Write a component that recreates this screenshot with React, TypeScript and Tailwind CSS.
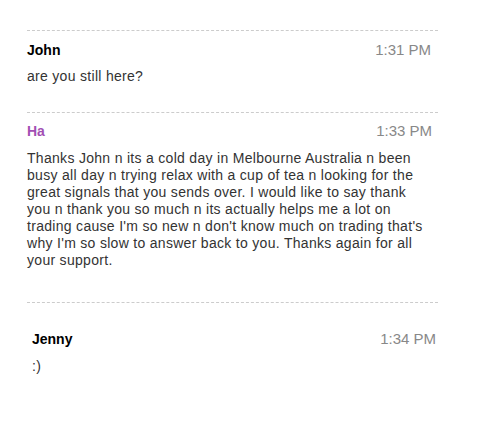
import React from "react";

type Message = {
  name: string;
  nameColor: string;
  time: string;
  lines: string[];
};

const messages: Message[] = [
  {
    name: "John",
    nameColor: "text-black",
    time: "1:31 PM",
    lines: ["are you still here?"],
  },
  {
    name: "Ha",
    nameColor: "text-[#a24fb3]",
    time: "1:33 PM",
    lines: [
      "Thanks John n its a cold day in Melbourne Australia n been",
      "busy all day n trying relax with a cup of tea n looking for the",
      "great signals that you sends over. I would like to say thank",
      "you n thank you so much n its actually helps me a lot on",
      "trading cause I'm so new n don't know much on trading that's",
      "why I'm so slow to answer back to you. Thanks again for all",
      "your support.",
    ],
  },
];

const MessageBody = ({ lines, className }: { lines: string[]; className: string }) => (
  <p className={`text-[14px] leading-[17px] text-[#333] tracking-[0.3px] whitespace-nowrap ${className}`}>
    {lines.map((line, i) => (
      <React.Fragment key={i}>
        {line}
        {i < lines.length - 1 && <br />}
      </React.Fragment>
    ))}
  </p>
);

export default function App() {
  return (
    <div className="min-h-[430px] w-[481px] bg-white pt-[30px] font-['Liberation_Sans',Arial,sans-serif]">
      <div className="ml-[27px] w-[411px]">
        {/* John */}
        <div className="border-t border-dashed border-[#cccccc] pt-[10px] pr-[7px] pb-[27px]">
          <div className="flex items-baseline justify-between">
            <span className={`text-[14px] leading-[17px] font-bold ${messages[0].nameColor}`}>{messages[0].name}</span>
            <span className="text-[15px] leading-[17px] text-[#888]">{messages[0].time}</span>
          </div>
          <MessageBody lines={messages[0].lines} className="mt-[9px]" />
        </div>

        {/* Ha */}
        <div className="border-t border-dashed border-[#cccccc] pt-[9px] pr-[6px] pb-[33px]">
          <div className="flex items-baseline justify-between">
            <span className={`text-[14px] leading-[17px] font-bold ${messages[1].nameColor}`}>{messages[1].name}</span>
            <span className="text-[15px] leading-[17px] text-[#888]">{messages[1].time}</span>
          </div>
          <MessageBody lines={messages[1].lines} className="mt-[10px]" />
        </div>

        {/* Jenny */}
        <div className="border-t border-dashed border-[#cccccc] pt-[27px] pl-[5px] pr-[2px] pb-[40px]">
          <div className="flex items-baseline justify-between">
            <span className="text-[14px] leading-[17px] font-bold text-black">Jenny</span>
            <span className="text-[15px] leading-[17px] text-[#888]">1:34 PM</span>
          </div>
          <MessageBody lines={[":)"]} className="mt-[10px]" />
        </div>
      </div>
    </div>
  );
}
